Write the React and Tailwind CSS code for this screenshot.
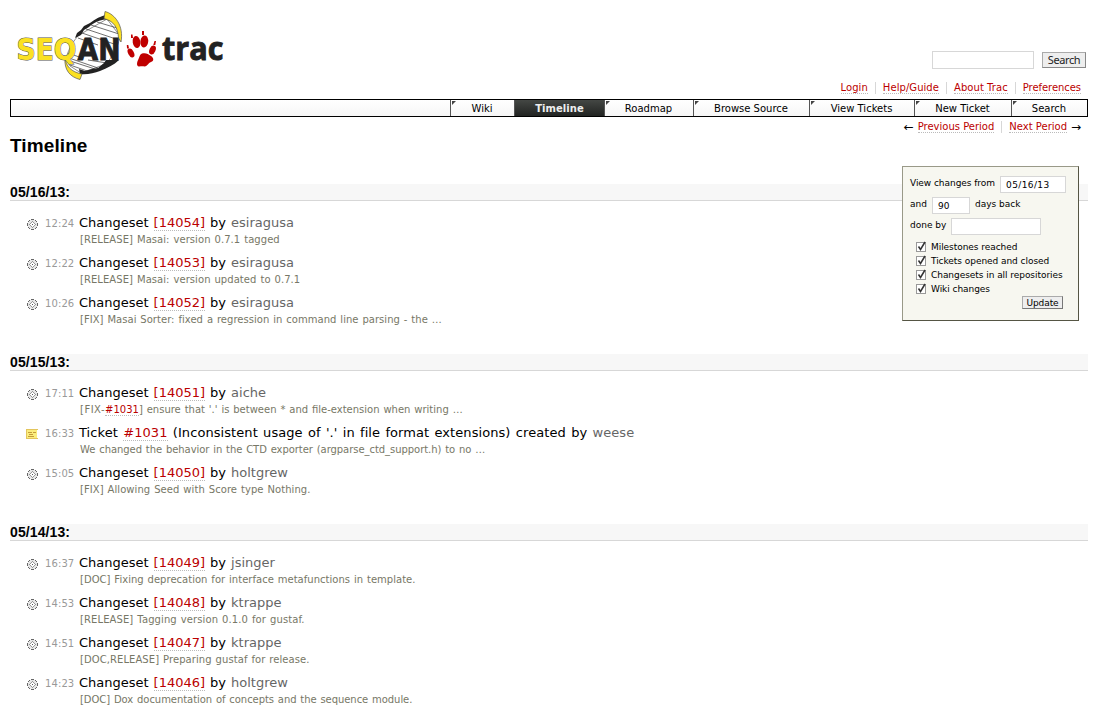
const V = "font-['DejaVu_Sans',sans-serif]";

function Logo() {
  return (
    <svg width="240" height="90" viewBox="0 0 240 90" className="block">
      <path d="M66 58C69 48 74 40 79 35L107 19L120 36C118 48 112 57 106 64L81 73L70 66Z" fill="#fff" stroke="#444" strokeWidth="0.6" />
      <g stroke="#333" strokeWidth="0.700" fill="none">
        <path d="M97 22l20 6M91 25l28 9M86 29l33 11M82 33l35 12M78 38l20 7M68 53l14 5M66 57l32 11M67 60l28 9M70 65l20 7M88 60l19 3M102 18l12 4" />
      </g>
      <path d="M75 38L77 33L81 30L84 26L90 23C95 19 101 16 107 14.500L109 18.500C99 20 93 23 89 27L84 30L81 35Z" fill="#222" />
      <path d="M79 69L85 71L92 69L98 68L104 63L106 60H119C114 65 107 68 100 71C94 73 87 75 80 74Z" fill="#222" />
      <path d="M105 11.500C115 14 124 26 121 42L118.500 38C118 28 114 21 104 18.500Z" fill="#fbe122" stroke="#555" strokeWidth="0.7" />
      <path d="M65 58C66 66 71 72 82 74L80 79.500C70 77 64 70 65 58Z" fill="#fbe122" stroke="#555" strokeWidth="0.7" />
      <text x="16.500" y="60" textLength="60" lengthAdjust="spacingAndGlyphs" fontFamily="'DejaVu Sans'" fontWeight="700" fontSize="29.500" fill="#fbe122" stroke="#555" strokeWidth="1" paintOrder="stroke">SEQ</text>
      <text x="77.500" y="60" textLength="43" lengthAdjust="spacingAndGlyphs" fontFamily="'DejaVu Sans'" fontWeight="700" fontSize="29.500" fill="#222" stroke="#222" strokeWidth="0.800">AN</text>
      <g fill="#c00000">
        <ellipse cx="136.500" cy="42" rx="3.800" ry="6" transform="rotate(-10 136.500 42)" />
        <ellipse cx="144.300" cy="41.500" rx="3.900" ry="6" transform="rotate(6 144.300 41.500)" />
        <ellipse cx="131" cy="53" rx="2.900" ry="4.700" transform="rotate(-28 131 53)" />
        <ellipse cx="152.500" cy="50" rx="3" ry="4.700" transform="rotate(24 152.500 50)" />
        <path d="M142 53.500C146 52.500 148 54 151 56C154 58 154 61 151 62C148 63 148 66 144.500 66.500C142 66 141 66.500 139 66.500C136 66 137 62 138.500 59C139.500 57 139.500 54.500 142 53.500Z" />
        <path d="M131 34.500l1.500 0l0.500 3.500l-2 0zM142 31l2 0l0 4l-2 0zM126.800 45l1.500 0l0.700 3.500l-2 0zM154.500 41l1.500 0l-0.700 4l-2 0z" />
      </g>
      <text x="162" y="60" textLength="61.500" lengthAdjust="spacingAndGlyphs" fontFamily="'Open Sans'" fontWeight="700" fontSize="31.500" fill="#222" stroke="#222" strokeWidth="0.900">trac</text>
    </svg>
  );
}

function Gear() {
  return (
    <svg width="11" height="11" viewBox="0 0 11 11" className="block" shapeRendering="crispEdges">
      <path d="M4 0h3v1h2v1h1v2h1v3h-1v2H9v1H7v1H4v-1H2V9H1V7H0V4h1V2h1V1h2z" fill="#e6e6e6" />
      <path d="M4 0h3v1H4zM2 1h1v1H2zM8 1h1v1H8zM1 2h1v1H1zM9 2h1v1H9zM0 4h1v3H0zM10 4h1v3h-1zM1 8h1v1H1zM9 8h1v1H9zM2 9h1v1H2zM8 9h1v1H8zM4 10h3v1H4z" fill="#666" />
      <path d="M5 2h1v1H5zM4 3h1v1H4zM6 3h1v1H6zM3 4h1v1H3zM7 4h1v1H7zM2 5h1v1H2zM8 5h1v1H8zM3 6h1v1H3zM7 6h1v1H7zM4 7h1v1H4zM6 7h1v1H6zM5 8h1v1H5z" fill="#999" />
      <path d="M5 3h1v1h1v1h1v1H7v1H6v1H5V7H4V6H3V5h1V4h1z" fill="#fff" />
      <path d="M5 5h1v1H5z" fill="#555" />
    </svg>
  );
}

function Note() {
  return (
    <svg width="12" height="10" viewBox="0 0 12 10" className="block" shapeRendering="crispEdges">
      <path d="M0 0h12v1h-1v8h1v1H0z" fill="#e3c55c" />
      <path d="M1 1h10v8H1z" fill="#fbed7d" />
      <path d="M2 3h4v1H2zM7 3h3v1H7zM3 5h4v1H3zM2 7h6v1H2z" fill="#c49c3a" />
    </svg>
  );
}

const A = ({ children }) => <a className="border-b border-dotted border-[#bbb] text-[#b00]">{children}</a>;

const days = [
  ["05/16/13:", [
    ["12:24", "14054", "esiragusa", "[RELEASE] Masai: version 0.7.1 tagged", "tracking-[0.06px]"],
    ["12:22", "14053", "esiragusa", "[RELEASE] Masai: version updated to 0.7.1", "tracking-[0.06px]"],
    ["10:26", "14052", "esiragusa", "[FIX] Masai Sorter: fixed a regression in command line parsing - the …", "tracking-[0.03px]"],
  ]],
  ["05/15/13:", [
    ["17:11", "14051", "aiche", <><span className="tracking-[0.5px]">[FIX-</span><A>#1031</A>] ensure that '.' is between * and file-extension when writing …</>, "tracking-[0px]"],
    ["16:33", null, "weese", "We changed the behavior in the CTD exporter (argparse_ctd_support.h) to no …", "tracking-[-0.05px]"],
    ["15:05", "14050", "holtgrew", "[FIX] Allowing Seed with Score type Nothing.", "tracking-[0.06px]"],
  ]],
  ["05/14/13:", [
    ["16:37", "14049", "jsinger", "[DOC] Fixing deprecation for interface metafunctions in template.", "tracking-[0.02px]"],
    ["14:53", "14048", "ktrappe", "[RELEASE] Tagging version 0.1.0 for gustaf.", "tracking-[0.1px]"],
    ["14:51", "14047", "ktrappe", "[DOC,RELEASE] Preparing gustaf for release.", "tracking-[0.07px]"],
    ["14:23", "14046", "holtgrew", "[DOC] Dox documentation of concepts and the sequence module.", "tracking-[-0.05px]"],
  ]],
];

function Event({ e: [time, id, who, text, spacing] }) {
  return (
    <div className="flex h-10">
      <div className={id ? "w-[18px] pt-[5px] pl-[1px]" : "w-[18px] pt-[5px]"}>{id ? <Gear /> : <Note />}</div>
      <div className="w-[35px] pt-[2px] pl-px text-[10px] leading-4 tracking-[0.1px] text-[#999]">{time}</div>
      <div className="whitespace-nowrap">
        <div className={id ? "text-[13px] leading-[18px] tracking-[-0.02px] [word-spacing:1px]" : "text-[13px] leading-[18px] tracking-[0.07px] [word-spacing:1.1px]"}>
          {id ? <>Changeset <A>[{id}]</A></> : <>Ticket <A>#1031</A> (Inconsistent usage of '.' in file format extensions) created</>} by <span className="text-[#666]">{who}</span>
        </div>
        <div className={`pl-px text-[10px] leading-4 text-[#776] [word-spacing:0.7px] ${spacing}`}>{text}</div>
      </div>
    </div>
  );
}

const tabs = [
  ["Wiki", "w-[64px]"], ["Timeline", "w-[90px]"], ["Roadmap", "w-[89px]"], ["Browse Source", "w-[116px]"],
  ["View Tickets", "w-[105px]"], ["New Ticket", "w-[97px]"], ["Search", "w-[76px]"],
];

function Tab({ label, w }) {
  if (label === "Timeline")
    return <div className={`${w} border-l border-[#555] bg-gradient-to-b from-[#444744] to-[#222422] text-center font-bold tracking-[0.05px] text-[#eee]`}>{label}</div>;
  return (
    <div className={`${w} relative border-l border-[#555] pr-px text-center`}>
      <svg width="4" height="4" className="absolute top-px left-px"><path d="M0 0h4L0 4z" fill="#444" /></svg>
      {label}
    </div>
  );
}

function Check({ label }) {
  return (
    <div className="flex h-[14px] items-center gap-[5px] pl-[6px]">
      <svg width="10" height="11" viewBox="0 0 10 11" className="block overflow-visible">
        <rect x="0.500" y="0.500" width="9" height="9" fill="#fff" stroke="#999" />
        <path d="M2.500 4.500L4.500 7.500L9 0" fill="none" stroke="#333" strokeWidth="1.500" />
      </svg>
      <span className="pt-px tracking-[-0.05px]">{label}</span>
    </div>
  );
}

export default function App() {
  return (
    <div className={`${V} relative h-[714px] w-[1098px] overflow-hidden bg-white text-[10px] text-black`}>
      <div className="flex h-[99px] justify-between">
        <Logo />
        <div className="flex flex-col items-end pt-[51px] pr-[12px]">
          <div className="flex items-start gap-2">
            <div className="h-[18px] w-[102px] border border-[#d7d7d7]" />
            <div className="mt-px h-4 w-11 border border-[#aaa] border-r-[#888] border-b-[#888] bg-[#eee] text-center font-['Noto_Sans',sans-serif] text-[11px] leading-[14px] tracking-[-0.4px] text-[#222]">Search</div>
          </div>
          <div className="mt-[13px] flex pr-[5px] leading-[12px] tracking-[0.06px]">
            <span className="pr-[7px]"><A>Login</A></span>
            <span className="border-l border-[#d7d7d7] px-[7px]"><A>Help/Guide</A></span>
            <span className="border-l border-[#d7d7d7] px-[7px]"><A>About Trac</A></span>
            <span className="border-l border-[#d7d7d7] pl-[7px] tracking-[-0.05px]"><A>Preferences</A></span>
          </div>
        </div>
      </div>
      <div className="mx-[10px] flex h-[18px] justify-end border border-black bg-gradient-to-b from-white to-[#f6f6f6] leading-[18px]">
        {tabs.map(([l, w]) => <Tab key={l} label={l} w={w} />)}
      </div>
      <div className="flex h-[22px] justify-between px-[10px]">
        <h1 className="pt-[18px] font-['Liberation_Sans',sans-serif] text-[19px] leading-[22px] font-bold tracking-[0.1px]">Timeline</h1>
        <div className="mt-[4px] mr-[7px] flex h-3 leading-[12px]">
          <span className="flex pr-[7px]"><span className="w-[14px] text-[12px]">←</span><A>Previous Period</A></span>
          <span className="flex border-l border-[#d7d7d7] pl-[7px]"><A>Next Period</A><span className="w-[14px] text-right text-[12px]">→</span></span>
        </div>
      </div>
      <div className="mx-[10px] mt-[45px]">
        {days.map(([d, evs]) => (
          <section key={d}>
            <h2 className="h-[17px] border-b border-[#d7d7d7] bg-[#f7f7f7] font-['Liberation_Sans',sans-serif] text-[14px] leading-[17px] font-bold tracking-[0.1px]">{d}</h2>
            <div className="mb-[20px] pt-[13px] pl-4">
              {evs.map((e) => <Event key={e[0]} e={e} />)}
            </div>
          </section>
        ))}
      </div>
      <form className="absolute top-[166px] left-[902px] h-[155px] w-[177px] border border-[#998] border-r-[#554] border-b-[#554] bg-[#f7f7f0] text-[9px]">
        <div className="mt-[9px] ml-[7px] flex h-[21px] gap-[5px]"><span className="w-[85px] pt-px tracking-[-0.05px] whitespace-nowrap">View changes from</span><span className="h-[17px] w-[66px] border border-[#d7d7d7] bg-white pl-[5px] leading-[16px] tracking-[0.4px]">05/16/13</span></div>
        <div className="ml-[7px] flex h-[21px] gap-[5px]"><span className="w-[17px] pt-px">and</span><span className="h-[17px] w-[38px] border border-[#d7d7d7] bg-white pl-[5px] leading-[16px]">90</span><span className="pt-px">days back</span></div>
        <div className="ml-[7px] flex h-[21px] gap-[5px]"><span className="w-[36px] pt-px whitespace-nowrap">done by</span><span className="h-[17px] w-[90px] border border-[#d7d7d7] bg-white" /></div>
        <div className="mt-px ml-[7px]">
          <Check label="Milestones reached" /><Check label="Tickets opened and closed" /><Check label="Changesets in all repositories" /><Check label="Wiki changes" />
        </div>
        <div className="ml-[119px] h-[13px] w-[41px] border border-[#aaa] border-r-[#777] border-b-[#777] bg-[#eee] text-center leading-[12px] tracking-[-0.1px]">Update</div>
      </form>
    </div>
  );
}
